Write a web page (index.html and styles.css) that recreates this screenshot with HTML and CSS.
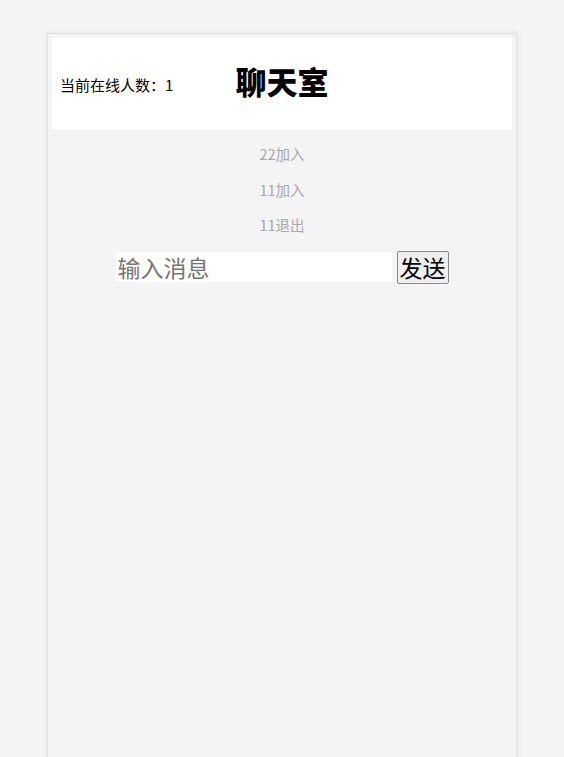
FILE: index.html
```html
<!DOCTYPE html>
<html>
<head>
    <meta charset="utf-8">
    <title>聊天室</title>
    <meta name="viewport" content="width=device-width, initial-scale=1.0">
    <link rel="stylesheet" href="styles.css">
</head>
<body>
    <div class="container">
        <div class="header">
            <div class="online">当前在线人数：<span id="online-count">1</span></div>
            <h1>聊天室</h1>
            <div></div>
        </div>

        <div class="messages" id="messages">
            <div class="notice">22加入</div>
            <div class="notice">11加入</div>
            <div class="notice">11退出</div>
        </div>

        <div class="send-bar">
            <input type="text" class="msg-input" id="msg-input" placeholder="输入消息">
            <button class="send-btn" id="send-btn">发送</button>
        </div>
    </div>
</body>
</html>
```

FILE: styles.css
```css
body {
    font-family: "Noto Sans CJK SC", "Noto Sans", sans-serif;
    background-color: #f4f4f4;
    margin: 0;
    padding-top: 33px;
}
.container {
    width: 470px;
    box-sizing: border-box;
    margin: 0 auto;
    padding: 4px;
    min-height: 760px;
    border: 1px solid #e0e0e0;
    box-shadow: 0 0 6px rgba(0, 0, 0, 0.08);
    background-color: #f4f4f4;
}
.header {
    display: grid;
    grid-template-columns: 1fr auto 1fr;
    align-items: center;
    height: 92px;
    padding: 0 8px;
    background-color: #fff;
}
.online {
    font-size: 15px;
    color: #000;
}
h1 {
    margin: 0 0 8px;
    font-size: 31px;
    font-weight: 900;
    color: #000;
}
.messages {
    padding-top: 14px;
    text-align: center;
}
.notice {
    font-size: 14.5px;
    color: #a8a8a8;
    line-height: 20px;
    margin-bottom: 15.5px;
}
.send-bar {
    display: flex;
    justify-content: center;
    align-items: center;
    gap: 5px;
    margin-top: 0;
}
.msg-input {
    width: 276px;
    height: 30px;
    box-sizing: border-box;
    border: none;
    outline: none;
    padding: 0 2px;
    font-family: inherit;
    font-size: 23px;
    background-color: #fff;
}
.msg-input::placeholder {
    color: #757575;
}
.send-btn {
    height: 33px;
    padding: 0 2px;
    font-family: inherit;
    font-size: 23px;
    line-height: 1;
    color: #000;
    background-color: #efefef;
    border: 1px solid #888;
    border-radius: 2px;
}
```
